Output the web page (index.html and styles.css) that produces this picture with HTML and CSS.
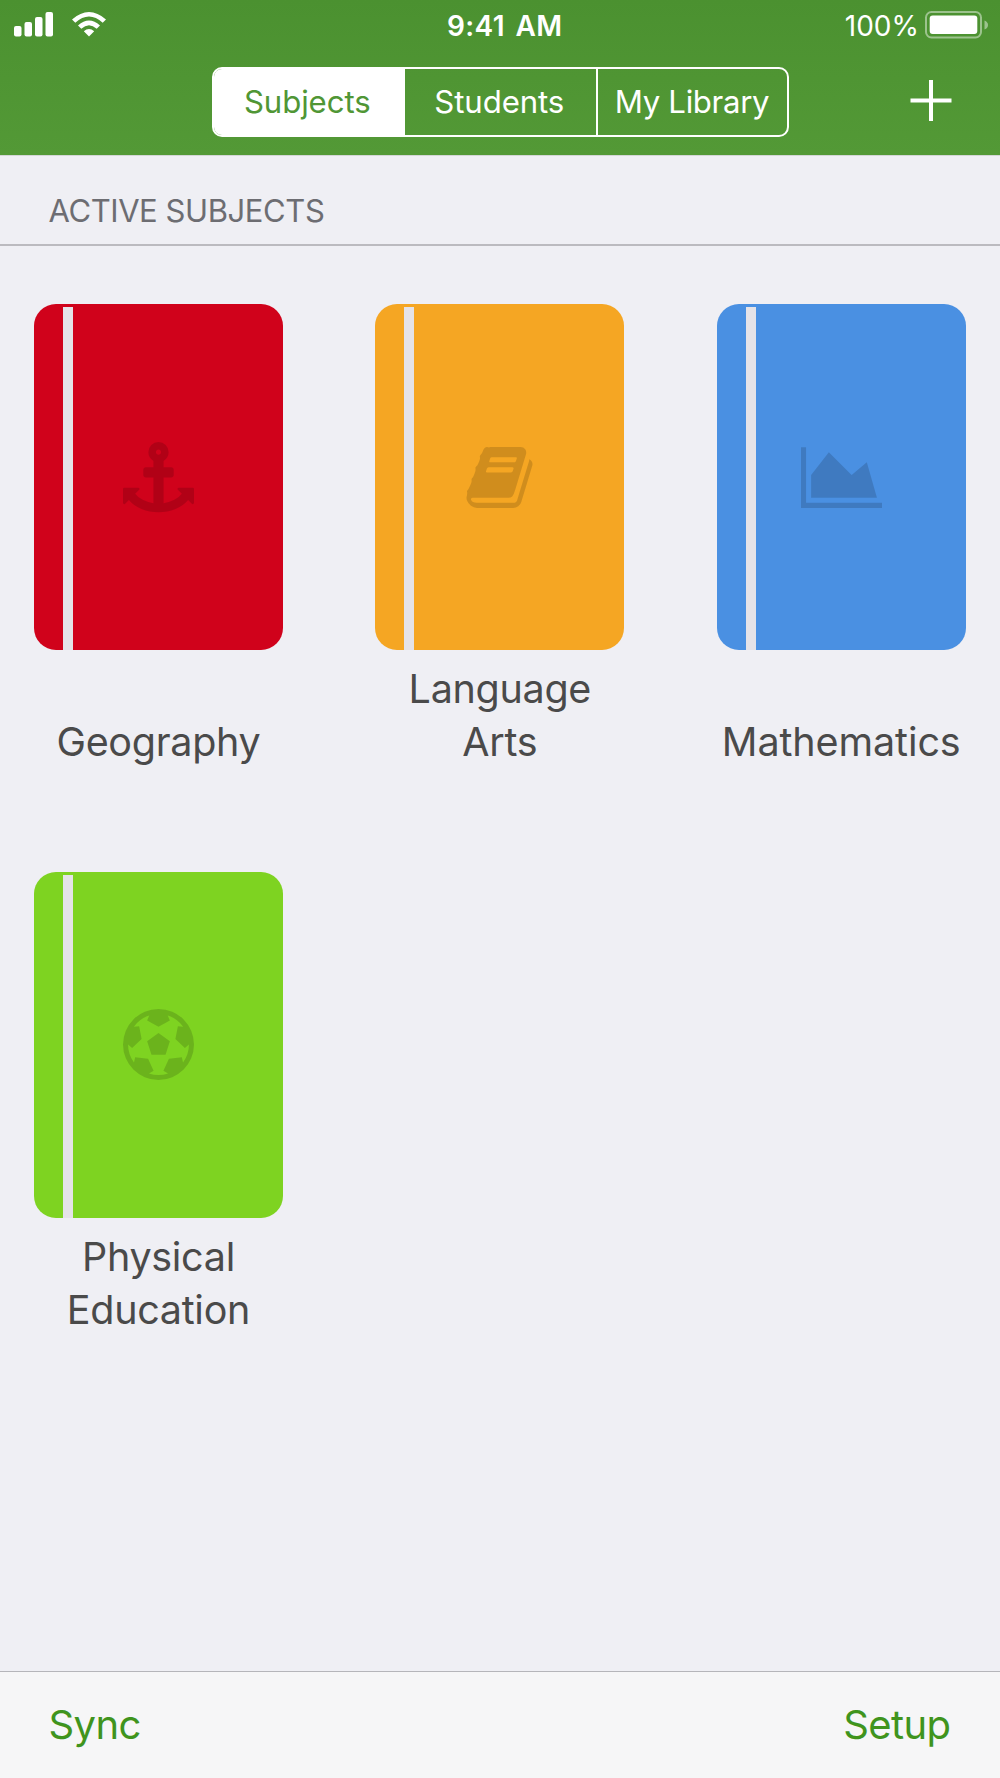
FILE: index.html
```html
<!DOCTYPE html>
<html lang="en">
<head>
<meta charset="utf-8">
<title>Subjects</title>
<link rel="stylesheet" href="styles.css">
</head>
<body>
<div class="screen">
  <header class="header">
    <div class="status">
      <div class="status-left">
        <svg class="signal" width="39" height="25" viewBox="0 0 39 25"><rect x="0" y="14" width="7.5" height="10.5" rx="2"/><rect x="10.5" y="10" width="7.5" height="14.5" rx="2"/><rect x="21" y="5" width="7.5" height="19.5" rx="2"/><rect x="31.5" y="0" width="7.5" height="24.5" rx="2"/></svg>
        <svg class="wifi" width="34" height="25" viewBox="0 0 34 25"><path d="M17 24.5 11.8 19.2Q17 15 22.2 19.2ZM9.300 16.800 6 13.500Q17 3.500 28 13.500L24.700 16.800Q17 9.800 9.300 16.800ZM3.300 10.800 0 7.500Q17-7.500 34 7.500L30.700 10.800Q17-2 3.300 10.800Z"/></svg>
      </div>
      <div class="time">9:41 AM</div>
      <div class="status-right">
        <span class="percent">100%</span>
        <svg class="battery" width="64" height="28" viewBox="0 0 64 28"><rect x="1" y="1" width="55" height="25.500" rx="5.500" fill="none" stroke="#fff" stroke-opacity=".45" stroke-width="2"/><rect x="4.700" y="4.500" width="47.600" height="18.500" rx="3"/><path d="M59.500 9.500Q63 11 63 14T59.500 18.500Z" fill-opacity=".45"/></svg>
      </div>
    </div>
    <nav class="navbar">
      <div class="segments">
        <span class="segment selected">Subjects</span>
        <span class="segment">Students</span>
        <span class="segment library">My Library</span>
      </div>
      <svg class="add" width="42" height="42" viewBox="0 0 42 42"><path d="M19 0h4v41h-4zM.500 18.500h41v4h-41z"/></svg>
    </nav>
  </header>
  <h2 class="section-title">ACTIVE SUBJECTS</h2>
  <main class="subjects">
    <article class="subject">
      <div class="book red"><svg width="71" height="71" viewBox="0 0 1792 1792"><path d="M960 256q0-26-19-45t-45-19-45 19-19 45 19 45 45 19 45-19 19-45zm832 928v352q0 22-20 30-8 2-12 2-12 0-23-9l-93-93q-119 143-318.500 226.500t-429.500 83.500-429.500-83.500-318.500-226.500l-93 93q-9 9-23 9-4 0-12-2-20-8-20-30v-352q0-14 9-23t23-9h352q22 0 30 20 8 19-7 35l-100 100q67 91 189.500 153.500t271.500 82.500v-647h-192q-26 0-45-19t-19-45v-128q0-26 19-45t45-19h192v-163q-58-34-93-92.500t-35-128.500q0-106 75-181t181-75 181 75 75 181q0 70-35 128.500t-93 92.500v163h192q26 0 45 19t19 45v128q0 26-19 45t-45 19h-192v647q149-20 271.500-82.500t189.500-153.500l-100-100q-15-16-7-35 8-20 30-20h352q14 0 23 9t9 23z"/></svg></div>
      <p class="name">Geography</p>
    </article>
    <article class="subject">
      <div class="book orange"><svg width="71" height="71" viewBox="0 0 1792 1792"><path d="M1703 478q40 57 18 129l-275 906q-19 64-76.500 107.500t-122.500 43.500h-923q-77 0-148.500-53.500t-99.500-131.500q-24-67-2-127 0-4 3-27t4-37q1-8-3-21.500t-3-19.500q2-11 8-21t16.500-23.500 16.500-23.500q23-38 45-91.500t30-91.500q3-10 .5-30t-.5-28q3-11 17-28t17-23q21-36 42-92t25-90q1-9-2.500-32t.5-28q4-13 22-30.500t22-22.500q19-26 42.500-84.500t27.500-96.500q1-8-3-25.500t-2-26.500q2-8 9-18t18-23 17-21q8-12 16.500-30.500t15-35 16-36 19.500-32 26.500-23.500 36-11.500 47.500 5.500l-1 3q38-9 51-9h761q74 0 114 56t18 130l-274 906q-36 119-71.500 153.500t-128.500 34.500h-869q-27 0-38 15-11 16-1 43 24 70 144 70h923q29 0 56-15.500t35-41.500l300-987q7-22 5-57 38 15 59 43zm-1064 2q-4 13 2 22.500t20 9.500h608q13 0 25.500-9.500t16.500-22.500l21-64q4-13-2-22.500t-20-9.500h-608q-13 0-25.500 9.500t-16.500 22.500zm-83 256q-4 13 2 22.500t20 9.500h608q13 0 25.500-9.500t16.500-22.500l21-64q4-13-2-22.500t-20-9.500h-608q-13 0-25.500 9.500t-16.500 22.500z"/></svg></div>
      <p class="name">Language<br>Arts</p>
    </article>
    <article class="subject">
      <div class="book blue"><svg width="81" height="71" viewBox="0 0 2048 1792"><path d="M2048 1536v128h-2048v-1536h128v1408h1920zm-384-1024l256 896h-1664v-576l448-576 576 576z"/></svg></div>
      <p class="name math">Mathematics</p>
    </article>
    <article class="subject">
      <div class="book green"><svg width="71" height="71" viewBox="0 0 1792 1792"><path d="M609 816l287-208 287 208-109 336h-355zm287-816q182 0 348 71t286 191 191 286 71 348-71 348-191 286-286 191-348 71-348-71-286-191-191-286-71-348 71-348 191-286 286-191 348-71zm619 1350q149-203 149-454v-3l-102 89-240-224 63-323 134 12q-150-206-389-282l53 124-287 159-287-159 53-124q-239 76-389 282l135-12 62 323-240 224-102-89v3q0 251 149 454l30-132 326 40 139 298-116 69q117 39 240 39t240-39l-116-69 139-298 326-40z"/></svg></div>
      <p class="name">Physical<br>Education</p>
    </article>
  </main>
  <footer class="toolbar"><span>Sync</span><span>Setup</span></footer>
</div>
</body>
</html>
```
FILE: styles.css
```css
* { box-sizing: border-box; margin: 0; padding: 0; }
body { font-family: Inter, "Liberation Sans", sans-serif; background: #efeff4; }
svg { display: block; fill: #fff; }
.screen { width: 1000px; height: 1778px; display: flex; flex-direction: column; background: #efeff4; }

.header { height: 156px; background: linear-gradient(#4b9130, #539936); border-bottom: 1px solid #d3d6d6; color: #fff; }
.status { height: 50px; display: grid; grid-template-columns: 1fr auto 1fr; align-items: center; padding: 0 11px 0 14.300px; }
.status-left { display: flex; gap: 19px; padding-bottom: 2px; }
.time { padding: 1px 0 0 6px; font-size: 28px; font-weight: 600; letter-spacing: .400px; word-spacing: 3px; }
.status-right { display: flex; justify-content: flex-end; align-items: center; gap: 6px; }
.percent { padding-top: 1px; font-size: 28px; }
.battery { margin-bottom: 1px; }
.navbar { display: grid; grid-template-columns: 211.500px 577px 1fr; padding-right: 48px; }
.segments { grid-column: 2; margin-top: 17px; height: 70px; display: grid; grid-template-columns: 189.500px 192.500px 1fr; border: 2px solid #fff; border-radius: 10px; overflow: hidden; }
.segment { display: flex; align-items: center; justify-content: center; padding-right: 2px; font-size: 31.200px; letter-spacing: -.100px; border-left: 2px solid #fff; }
.segment.selected { background: #fff; color: #509635; border-left: 0; }
.segment.library { padding-right: 0; letter-spacing: -.350px; }
.add { justify-self: end; margin-top: 30px; }

.section-title { height: 90px; padding: 36px 48.500px 0; font-size: 31px; line-height: 38px; font-weight: 400; letter-spacing: -.420px; color: #6d6d72; border-bottom: 2px solid #bbbabf; }

.subjects { flex: 1; display: grid; grid-template-columns: repeat(3, 249.300px); column-gap: 92.100px; row-gap: 103px; align-content: start; padding: 58px 33.800px 0; }
.subject { height: 465px; display: flex; flex-direction: column; justify-content: space-between; }
.book { height: 345.500px; border-radius: 22px; display: flex; align-items: center; justify-content: center; padding-top: 1px; background: linear-gradient(#e5e3e8, #e5e3e8) 29px 3px / 10px 343px no-repeat; }
.book svg { fill: #000; fill-opacity: .15; }
.red { background-color: #d0021b; }
.orange { background-color: #f5a623; }
.blue { background-color: #4a90e2; }
.green { background-color: #7ed321; padding-top: 0; }
.name { font-size: 39.500px; line-height: 53px; letter-spacing: -.300px; text-align: center; color: #4a4a4a; }
.name.math { letter-spacing: -.100px; }

.toolbar { height: 107.500px; border-top: 1px solid #b5b5ba; background: #f6f6f7; display: flex; justify-content: space-between; align-items: center; padding: 0 49.500px 0 48.500px; font-size: 40px; letter-spacing: -.600px; color: #3f941d; }
```
